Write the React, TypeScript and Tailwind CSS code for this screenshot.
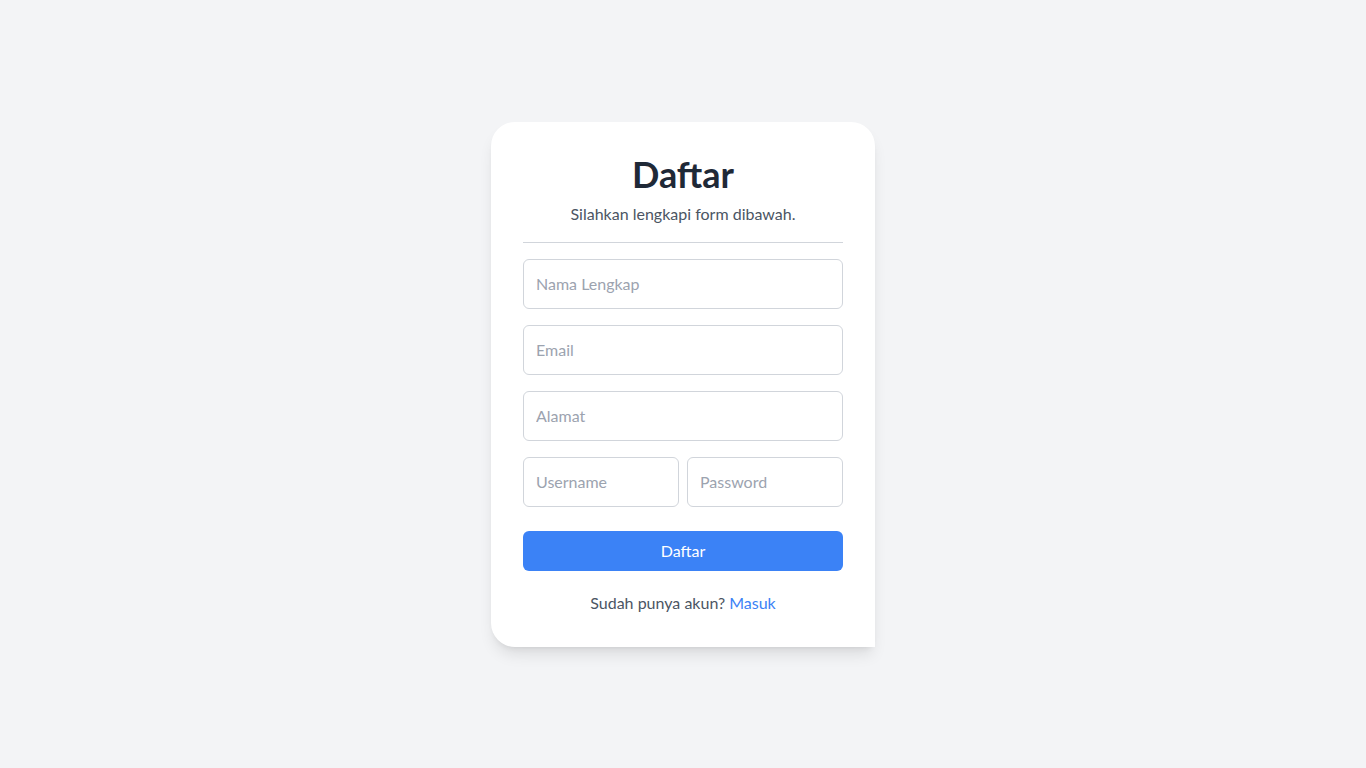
export default function App() {
  return (
    <div className="min-h-screen bg-[#f3f4f6] flex items-center justify-center font-['Lato',sans-serif]">
      <div className="w-96 bg-white p-8 rounded-tl-3xl rounded-tr-3xl rounded-bl-3xl shadow-lg">
        <h1 className="text-4xl font-bold text-center text-[#1f2937]">Daftar</h1>
        <p className="mt-2 text-center text-[#4b5563]">Silahkan lengkapi form dibawah.</p>
        <hr className="my-4 border-[#d1d5db]" />
        <form className="space-y-4" onSubmit={(e) => e.preventDefault()}>
          <input
            type="text"
            placeholder="Nama Lengkap"
            className="block w-full px-3 py-3 border border-[#d1d5db] rounded-md placeholder-[#9ca3af] outline-none"
          />
          <input
            type="email"
            placeholder="Email"
            className="block w-full px-3 py-3 border border-[#d1d5db] rounded-md placeholder-[#9ca3af] outline-none"
          />
          <input
            type="text"
            placeholder="Alamat"
            className="block w-full px-3 py-3 border border-[#d1d5db] rounded-md placeholder-[#9ca3af] outline-none"
          />
          <div className="flex gap-2">
            <input
              type="text"
              placeholder="Username"
              className="block w-1/2 min-w-0 px-3 py-3 border border-[#d1d5db] rounded-md placeholder-[#9ca3af] outline-none"
            />
            <input
              type="password"
              placeholder="Password"
              className="block w-1/2 min-w-0 px-3 py-3 border border-[#d1d5db] rounded-md placeholder-[#9ca3af] outline-none"
            />
          </div>
          <button type="submit" className="!mt-6 block w-full py-2 bg-[#3b82f6] text-white rounded-md">
            Daftar
          </button>
        </form>
        <p className="mt-5 text-center text-[#4b5563]">
          Sudah punya akun? <a href="#" className="text-[#3b82f6]">Masuk</a>
        </p>
      </div>
    </div>
  );
}
